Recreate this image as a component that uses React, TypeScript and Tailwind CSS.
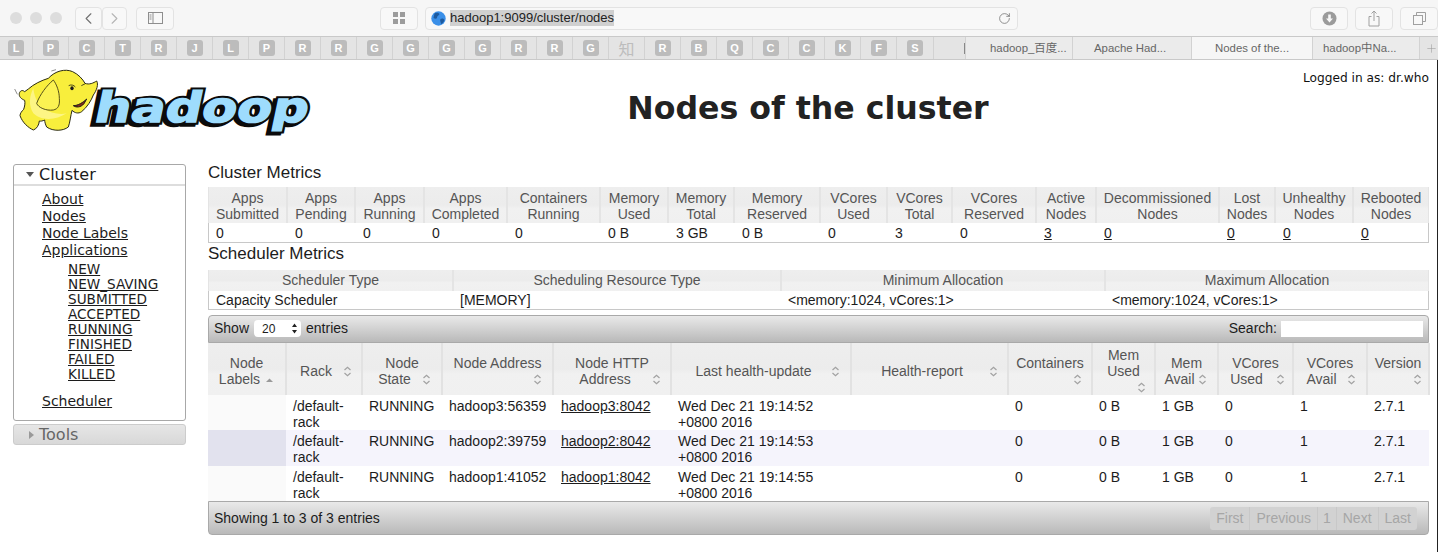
import { ChevronLeft, ChevronRight, Plus, RotateCw } from 'lucide-react'

const bookmarks = ['L', 'P', 'C', 'T', 'R', 'J', 'L', 'P', 'R', 'R', 'G', 'G', 'G', 'G', 'R', 'R', 'G', '知', 'R', 'B', 'Q', 'C', 'C', 'K', 'F', 'S']

const clusterMetrics = [
  { width: 'w-[79px]', head: ['Apps', 'Submitted'], value: '0' },
  { width: 'w-[68px]', head: ['Apps', 'Pending'], value: '0' },
  { width: 'w-[69px]', head: ['Apps', 'Running'], value: '0' },
  { width: 'w-[83px]', head: ['Apps', 'Completed'], value: '0' },
  { width: 'w-[93px]', head: ['Containers', 'Running'], value: '0' },
  { width: 'w-[68px]', head: ['Memory', 'Used'], value: '0 B' },
  { width: 'w-[66px]', head: ['Memory', 'Total'], value: '3 GB' },
  { width: 'w-[86px]', head: ['Memory', 'Reserved'], value: '0 B' },
  { width: 'w-[67px]', head: ['VCores', 'Used'], value: '0' },
  { width: 'w-[65px]', head: ['VCores', 'Total'], value: '3' },
  { width: 'w-[84px]', head: ['VCores', 'Reserved'], value: '0' },
  { width: 'w-[60px]', head: ['Active', 'Nodes'], value: '3', link: true },
  { width: 'w-[123px]', head: ['Decommissioned', 'Nodes'], value: '0', link: true },
  { width: 'w-[56px]', head: ['Lost', 'Nodes'], value: '0', link: true },
  { width: 'w-[78px]', head: ['Unhealthy', 'Nodes'], value: '0', link: true },
  { width: 'w-[76px]', head: ['Rebooted', 'Nodes'], value: '0', link: true },
]

const schedulerMetrics = [
  { width: 'w-[245px]', head: 'Scheduler Type', value: 'Capacity Scheduler' },
  { width: 'w-[328px]', head: 'Scheduling Resource Type', value: '[MEMORY]' },
  { width: 'w-[324px]', head: 'Minimum Allocation', value: '<memory:1024, vCores:1>' },
  { width: 'w-[324px]', head: 'Maximum Allocation', value: '<memory:1024, vCores:1>' },
]

// gap is the space before the sort arrows, shift pushes the last line to the right
const nodeColumns = [
  { width: 'w-[78px]', lines: ['Node', 'Labels'], gap: 'ml-[5px]', shift: '', sorted: true },
  { width: 'w-[76px]', lines: ['Rack'], gap: 'ml-[11px]', shift: 'mr-[-4px]' },
  { width: 'w-[80px]', lines: ['Node', 'State'], gap: 'ml-[11px]', shift: 'mr-[-5px]' },
  { width: 'w-[111px]', lines: ['Node Address', ''], gap: 'ml-[80px]', shift: '' },
  { width: 'w-[118px]', lines: ['Node HTTP', 'Address'], gap: 'ml-[21px]', shift: 'mr-[-16px]' },
  { width: 'w-[180px]', lines: ['Last health-update'], gap: 'ml-[20px]', shift: 'mr-[-14px]' },
  { width: 'w-[157px]', lines: ['Health-report'], gap: 'ml-[26px]', shift: 'mr-[-20px]' },
  { width: 'w-[84px]', lines: ['Containers', ''], gap: 'ml-[55px]', shift: '' },
  { width: 'w-[63px]', lines: ['Mem', 'Used', ''], gap: 'ml-[35px]', shift: '' },
  { width: 'w-[63px]', lines: ['Mem', 'Avail'], gap: 'ml-[3px]', shift: 'mr-[2px]' },
  { width: 'w-[75px]', lines: ['VCores', 'Used'], gap: 'ml-[13px]', shift: 'mr-[-4px]' },
  { width: 'w-[74px]', lines: ['VCores', 'Avail'], gap: 'ml-[10px]', shift: 'mr-[-2px]' },
  { width: 'w-[62px]', lines: ['Version', ''], gap: 'ml-[38px]', shift: '' },
]

const nodes = [
  { address: 'hadoop3:56359', http: 'hadoop3:8042', date: 'Wed Dec 21 19:14:52', height: 'h-[35px]', odd: false },
  { address: 'hadoop2:39759', http: 'hadoop2:8042', date: 'Wed Dec 21 19:14:53', height: 'h-[36px]', odd: true },
  { address: 'hadoop1:41052', http: 'hadoop1:8042', date: 'Wed Dec 21 19:14:55', height: 'h-[35px]', odd: false },
]

const headBg = 'bg-[linear-gradient(#eeeeee_0%,#ececec_50%,#f1f1f1_60%,#f0f0f0_100%)]'
const barBg = 'bg-[linear-gradient(#e9e9e9,#b9b9b9)]'
const bodyCell = 'border-b border-[#c8c8c8] leading-[16px] text-[#1c1c1c] first:border-l first:pl-[7px] last:border-r'

function SortIcon({ sorted }: { sorted?: boolean }) {
  if (sorted) {
    return (
      <svg width="9" height="10" viewBox="0 0 9 10" className="inline-block align-[-1px]">
        <path d="M1 7 L4.5 3.5 L8 7 Z" fill="#9a9a9a" />
      </svg>
    )
  }
  return (
    <svg width="9" height="11" viewBox="0 0 9 11" className="inline-block align-[-1px]" fill="none" stroke="#a2a2a2" strokeWidth="1.2">
      <path d="M1.5 4 L4.5 1.2 L7.5 4" />
      <path d="M1.5 7 L4.5 9.8 L7.5 7" />
    </svg>
  )
}

function ToolButton({ width, children }: { width: string; children: React.ReactNode }) {
  return (
    <div className={`flex h-[23px] ${width} items-center justify-center rounded-[4px] border border-[#e3e3e3] bg-[#f8f8f8]`}>
      {children}
    </div>
  )
}

function Browser() {
  return (
    <div className="font-['Liberation_Sans',sans-serif]">
      <div className="flex h-[36px] items-center bg-[#f6f6f6] pl-[10px]">
        <div className="flex gap-[8px]">
          <div className="h-[12px] w-[12px] rounded-full bg-[#dddddd]" />
          <div className="h-[12px] w-[12px] rounded-full bg-[#dddddd]" />
          <div className="h-[12px] w-[12px] rounded-full bg-[#dddddd]" />
        </div>
        <div className="ml-[13px] flex">
          <ToolButton width="w-[27px]">
            <ChevronLeft size={19} strokeWidth={1.4} className="text-[#707070]" />
          </ToolButton>
          <ToolButton width="w-[25px]">
            <ChevronRight size={19} strokeWidth={1.4} className="text-[#b4b4b4]" />
          </ToolButton>
        </div>
        <div className="ml-[9px]">
          <ToolButton width="w-[38px]">
            <svg width="15" height="12" viewBox="0 0 15 12" fill="none" stroke="#8e8e8e">
              <rect x="0.5" y="0.5" width="14" height="11" />
              <path d="M5 .5 V11.5 M1.5 3 H3.5 M1.5 5 H3.5 M1.5 7 H3.5" />
            </svg>
          </ToolButton>
        </div>
        <div className="ml-[206px]">
          <ToolButton width="w-[38px]">
            <div className="grid grid-cols-2 gap-[2px]">
              <div className="h-[5px] w-[5px] bg-[#9c9c9c]" />
              <div className="h-[5px] w-[5px] bg-[#9c9c9c]" />
              <div className="h-[5px] w-[5px] bg-[#9c9c9c]" />
              <div className="h-[5px] w-[5px] bg-[#9c9c9c]" />
            </div>
          </ToolButton>
        </div>
        <div className="ml-[7px] flex h-[23px] w-[593px] items-center rounded-[4px] border border-[#e3e3e3] bg-[#f8f8f8] pl-[5px] pr-[5px]">
          <svg width="15" height="15" viewBox="0 0 15 15">
            <circle cx="7.5" cy="7.5" r="7.2" fill="#3a8fe8" />
            <path d="M3.5 2.5 C5 1.5 7.5 1.5 8.5 3 C8 5 6 4.5 6 6.5 C6 8 4 8 2.5 7 Z M9.5 8 C11 7 13 7.5 13.5 9 C12.5 11.5 11 13 10 13 C10 11 8.5 10 9.5 8 Z" fill="#1d5a9f" />
          </svg>
          <span className="ml-[4px] bg-[#d0d0d0] text-[13px] leading-[16px] text-[#222222]">hadoop1:9099/cluster/nodes</span>
          <RotateCw size={13} strokeWidth={1.3} className="ml-auto mr-[1px] text-[#666666]" />
        </div>
        <div className="ml-auto flex gap-[7px]">
          <ToolButton width="w-[38px]">
            <svg width="15" height="15" viewBox="0 0 15 15">
              <circle cx="7.5" cy="7.5" r="7" fill="#9b9b9b" />
              <path d="M6.2 3.5 H8.8 V7.5 H11 L7.5 11.5 L4 7.5 H6.2 Z" fill="#f8f8f8" />
            </svg>
          </ToolButton>
          <ToolButton width="w-[38px]">
            <svg width="12" height="17" viewBox="0 0 12 17" fill="none" stroke="#a0a0a0">
              <path d="M3.5 6.5 H1 V16 H11 V6.5 H8.5 M6 11 V1 M3.5 3.5 L6 1 L8.5 3.5" />
            </svg>
          </ToolButton>
          <ToolButton width="w-[38px]">
            <svg width="13" height="13" viewBox="0 0 13 13" fill="none" stroke="#a0a0a0">
              <rect x="0.5" y="3.5" width="9" height="9" />
              <path d="M3.5 3.5 V0.5 H12.5 V9.5 H9.5" />
            </svg>
          </ToolButton>
        </div>
      </div>
      <div className="flex h-[24px] border-y border-[#c9c9c9] bg-[#e4e4e4]">
        <div className="flex w-[966px] items-center">
          {bookmarks.map((mark, i) => (
            <div key={i} className={`flex h-full shrink-0 items-center justify-center border-r border-[#d2d2d2] ${i === 0 ? 'w-[33px]' : i === 25 ? 'w-[37px]' : 'w-[36px]'}`}>
              {mark === '知' ? (
                <span className="font-['Noto_Sans_CJK_SC',sans-serif] text-[16px] leading-none text-[#bdbdbd]">知</span>
              ) : (
                <span className="flex h-[16px] w-[16px] items-center justify-center rounded-[3px] bg-[#bcbcbc] text-[11px] font-bold leading-none text-white">{mark}</span>
              )}
            </div>
          ))}
          <div className="ml-auto h-[11px] w-px bg-[#888888]" />
        </div>
        <div className="flex flex-1 text-[11.4px] text-[#666666]">
          <div className="w-[108px] border-x border-[#d2d2d2] bg-[#ebebeb] pl-[24px] pt-[3px] font-['Liberation_Sans','Noto_Sans_CJK_SC',sans-serif]">hadoop_百度...</div>
          <div className="w-[119px] border-r border-[#d2d2d2] bg-[#ebebeb] pl-[21px] pt-[3px]">Apache Had...</div>
          <div className="w-[121px] border-r border-[#d2d2d2] bg-[#f6f6f6] pl-[23px] pt-[3px]">Nodes of the...</div>
          <div className="w-[107px] border-r border-[#d2d2d2] bg-[#ebebeb] pl-[10px] pt-[3px] font-['Liberation_Sans','Noto_Sans_CJK_SC',sans-serif]">hadoop中Na...</div>
          <div className="flex flex-1 items-center pl-[5px] text-[#999999]">
            <Plus size={13} strokeWidth={1} />
          </div>
        </div>
      </div>
    </div>
  )
}

function HadoopLogo() {
  return (
    <svg width="300" height="72" viewBox="39 204 900 216" className="shrink-0">
      <defs>
        <text
          id="hadoop-word"
          x="279"
          y="366"
          textLength="642"
          lengthAdjust="spacingAndGlyphs"
          className="font-['DejaVu_Sans',sans-serif] text-[126px] font-bold"
        >
          hadoop
        </text>
      </defs>
      <g transform="translate(76 0) skewX(-12)" strokeLinejoin="miter">
        <use href="#hadoop-word" x="-8" y="5" fill="#0b0b0b" stroke="#0b0b0b" strokeWidth="16" />
        <use href="#hadoop-word" fill="#0b0b0b" stroke="#0b0b0b" strokeWidth="16" />
        <use href="#hadoop-word" fill="#9edcfd" stroke="#9edcfd" strokeWidth="4" />
      </g>
      <g transform="translate(30 195)">
        <path
          d="M28 85 C30 78 36 73 44 80 L55 72 C70 58 95 46 115 40 C135 18 165 10 188 20 C205 28 218 42 225 55 C238 60 250 54 260 48 C266 58 260 76 250 90 C244 106 232 126 215 140 C205 147 194 144 186 136 C182 152 180 172 175 186 C160 198 130 200 110 186 C106 178 104 170 104 165 C98 168 92 169 88 168 C87 180 80 192 70 195 C55 188 38 174 30 152 C30 145 36 138 41 133 C44 124 46 115 44 106 C34 102 26 95 28 85 Z"
          fill="#f8ee3c"
          stroke="#2a2a14"
          strokeWidth="3"
        />
        <path d="M70 70 C58 95 55 120 70 145 C95 170 140 165 170 145 C150 150 120 145 100 130 C80 115 72 90 70 70 Z" fill="#fdf584" />
        <path d="M130 45 C110 62 90 88 80 115 C85 128 108 138 130 135 C144 132 150 122 148 100 C148 80 140 58 130 45 Z" fill="#fbf252" stroke="#55501a" strokeWidth="3" />
        <path d="M190 122 C198 128 212 128 222 116 L230 102 C220 112 204 122 190 122 Z" fill="#8a2b16" stroke="#1b1b1b" strokeWidth="3" />
        <ellipse cx="186" cy="70" rx="5" ry="6" fill="#1b1b1b" />
        <path d="M176 62 C182 58 192 60 196 66 M214 62 L226 56" fill="none" stroke="#2a2a14" strokeWidth="2.5" />
        <path d="M14 72 L22 88 M124 18 L138 14" fill="none" stroke="#777777" strokeWidth="2.5" />
      </g>
    </svg>
  )
}

function Sidebar() {
  const links = ['About', 'Nodes', 'Node Labels', 'Applications']
  const states = ['NEW', 'NEW_SAVING', 'SUBMITTED', 'ACCEPTED', 'RUNNING', 'FINISHED', 'FAILED', 'KILLED']
  return (
    <aside className="ml-[13px] w-[173px] shrink-0 font-['DejaVu_Sans',sans-serif] text-[#1c1c1c]">
      <div className="h-[257px] rounded-[3px] border border-[#a8a8a8]">
        <div className="flex h-[21px] items-center border-b-2 border-[#dddddd] pl-[12px] text-[16px] leading-[19px]">
          <svg width="8" height="5" viewBox="0 0 8 5" className="mr-[5px]">
            <path d="M0 0 H8 L4 5 Z" fill="#555555" />
          </svg>
          Cluster
        </div>
        <div className="pl-[28px] pt-[5px] text-[14px] leading-[17px]">
          {links.map((link) => (
            <a key={link} className="block w-fit underline">{link}</a>
          ))}
          <div className="pl-[26px] pt-[3px] text-[13.6px] leading-[15px]">
            {states.map((state) => (
              <a key={state} className="block w-fit underline">{state}</a>
            ))}
          </div>
          <a className="mt-[11px] block w-fit underline">Scheduler</a>
        </div>
      </div>
      <div className="mt-[3px] flex h-[21px] items-center rounded-[3px] border border-[#cccccc] bg-[linear-gradient(#e6e6e6,#d8d8d8)] pl-[15px] text-[16px] text-[#666666]">
        <svg width="5" height="8" viewBox="0 0 5 8" className="mr-[5px]">
          <path d="M0 0 V8 L5 4 Z" fill="#999999" />
        </svg>
        Tools
      </div>
    </aside>
  )
}

function ClusterTable() {
  return (
    <table className="w-[1221px] table-fixed border-separate border-spacing-0 text-[14px]">
      <colgroup>
        {clusterMetrics.map((m) => (
          <col key={m.head.join()} className={m.width} />
        ))}
      </colgroup>
      <thead>
        <tr className="h-[36px]">
          {clusterMetrics.map((m) => (
            <th key={m.head.join()} className={`border-x border-[#e4e4e4] px-0 pt-[2px] text-center font-normal leading-[16px] text-[#555555] ${headBg}`}>
              {m.head[0]}
              <br />
              {m.head[1]}
            </th>
          ))}
        </tr>
      </thead>
      <tbody>
        <tr className="h-[20px]">
          {clusterMetrics.map((m) => (
            <td key={m.head.join()} className={`pl-[8px] ${bodyCell}`}>
              {m.link ? <a className="underline">{m.value}</a> : m.value}
            </td>
          ))}
        </tr>
      </tbody>
    </table>
  )
}

function SchedulerTable() {
  return (
    <table className="w-[1221px] table-fixed border-separate border-spacing-0 text-[14px]">
      <colgroup>
        {schedulerMetrics.map((m) => (
          <col key={m.head} className={m.width} />
        ))}
      </colgroup>
      <thead>
        <tr className="h-[21px]">
          {schedulerMetrics.map((m) => (
            <th key={m.head} className={`border-x border-[#e4e4e4] text-center font-normal text-[#555555] ${headBg}`}>{m.head}</th>
          ))}
        </tr>
      </thead>
      <tbody>
        <tr className="h-[19px]">
          {schedulerMetrics.map((m) => (
            <td key={m.head} className={`pl-[7px] ${bodyCell}`}>{m.value}</td>
          ))}
        </tr>
      </tbody>
    </table>
  )
}

function NodesTable() {
  const cell = 'px-[7px] pt-[3px] align-top'
  return (
    <div className="mt-[5px] w-[1221px] text-[14px] text-[#1c1c1c]">
      <div className={`flex h-[28px] items-center justify-between rounded-t-[4px] border border-[#a9a9a9] px-[5px] pb-[1px] ${barBg}`}>
        <div className="flex items-center">
          Show
          <div className="mx-[5px] flex h-[17px] w-[47px] items-center justify-between rounded-[4px] bg-white pl-[8px] pr-[3px] text-[12px]">
            20
            <svg width="7" height="11" viewBox="0 0 7 11">
              <path d="M3.5 0.5 L6 4 H1 Z M3.5 10.5 L6 7 H1 Z" fill="#222222" />
            </svg>
          </div>
          entries
        </div>
        <div className="flex items-center">
          Search:
          <input aria-label="Search" className="ml-[4px] h-[16px] w-[142px] bg-white outline-none" />
        </div>
      </div>
      <table className="w-full table-fixed border-collapse">
        <colgroup>
          {nodeColumns.map((c) => (
            <col key={c.lines.join()} className={c.width} />
          ))}
        </colgroup>
        <thead>
          <tr className="h-[52px]">
            {nodeColumns.map((c) => (
              <th key={c.lines.join()} className={`border-r-2 border-[#e2e2e2] px-0 pt-[3px] text-center font-normal leading-[16px] text-[#555555] ${headBg}`}>
                {c.lines.map((line, i) => (
                  <div key={i}>
                    {line}
                    {i === c.lines.length - 1 && (
                      <span className={`inline-block ${c.gap} ${c.shift}`}>
                        <SortIcon sorted={c.sorted} />
                      </span>
                    )}
                  </div>
                ))}
              </th>
            ))}
          </tr>
        </thead>
        <tbody className="leading-[16px]">
          {nodes.map((n) => (
            <tr key={n.address} className={`${n.height} ${n.odd ? 'bg-[#f5f4fc]' : 'bg-white'}`}>
              <td className={n.odd ? 'bg-[#e2e2ee]' : 'bg-[#fafafa]'} />
              <td className={cell}>/default-<br />rack</td>
              <td className={cell}>RUNNING</td>
              <td className={cell}>{n.address}</td>
              <td className="pl-[8px] pt-[3px] align-top"><a className="underline">{n.http}</a></td>
              <td className={cell}>{n.date}<br />+0800 2016</td>
              <td className={cell} />
              <td className={cell}>0</td>
              <td className={cell}>0 B</td>
              <td className={cell}>1 GB</td>
              <td className={cell}>0</td>
              <td className={cell}>1</td>
              <td className={cell}>2.7.1</td>
            </tr>
          ))}
        </tbody>
      </table>
      <div className={`flex h-[34px] items-center justify-between rounded-b-[4px] border border-[#a9a9a9] pl-[5px] pr-[11px] ${barBg}`}>
        Showing 1 to 3 of 3 entries
        <div className="flex h-[23px] items-center rounded-[3px] bg-[#d2d2d2] text-[#a6a6a6]">
          <span className="border-r border-[#c8c8c8] px-[6px] leading-[23px]">First</span>
          <span className="border-r border-[#c8c8c8] px-[6px] leading-[23px]">Previous</span>
          <span className="border-r border-[#c8c8c8] px-[5px] leading-[23px]">1</span>
          <span className="border-r border-[#c8c8c8] px-[6px] leading-[23px]">Next</span>
          <span className="px-[6px] leading-[23px]">Last</span>
        </div>
      </div>
    </div>
  )
}

function App() {
  return (
    <div className="h-[552px] w-[1438px] overflow-hidden bg-white font-['Liberation_Sans',sans-serif]">
      <Browser />
      <div className="h-[492px] border-r border-[#222222]">
        <header className="flex h-[104px]">
          <div className="pl-[13px] pt-[8px]">
            <HadoopLogo />
          </div>
          <h1 className="flex-1 pt-[24px] text-center font-['DejaVu_Sans',sans-serif] text-[31.6px] font-bold leading-[48px] text-[#222222]">
            Nodes of the cluster
          </h1>
          <div className="pr-[8px] pt-[10px] font-['DejaVu_Sans',sans-serif] text-[12.2px] leading-[16px] text-[#111111]">
            Logged in as: dr.who
          </div>
        </header>
        <div className="flex">
          <Sidebar />
          <main className="ml-[22px]">
            <h2 className="h-[23px] text-[17px] leading-[18px] text-[#1c1c1c]">Cluster Metrics</h2>
            <ClusterTable />
            <h2 className="h-[27px] pt-[2px] text-[17px] leading-[18px] text-[#1c1c1c]">Scheduler Metrics</h2>
            <SchedulerTable />
            <NodesTable />
          </main>
        </div>
      </div>
    </div>
  )
}

export default App
